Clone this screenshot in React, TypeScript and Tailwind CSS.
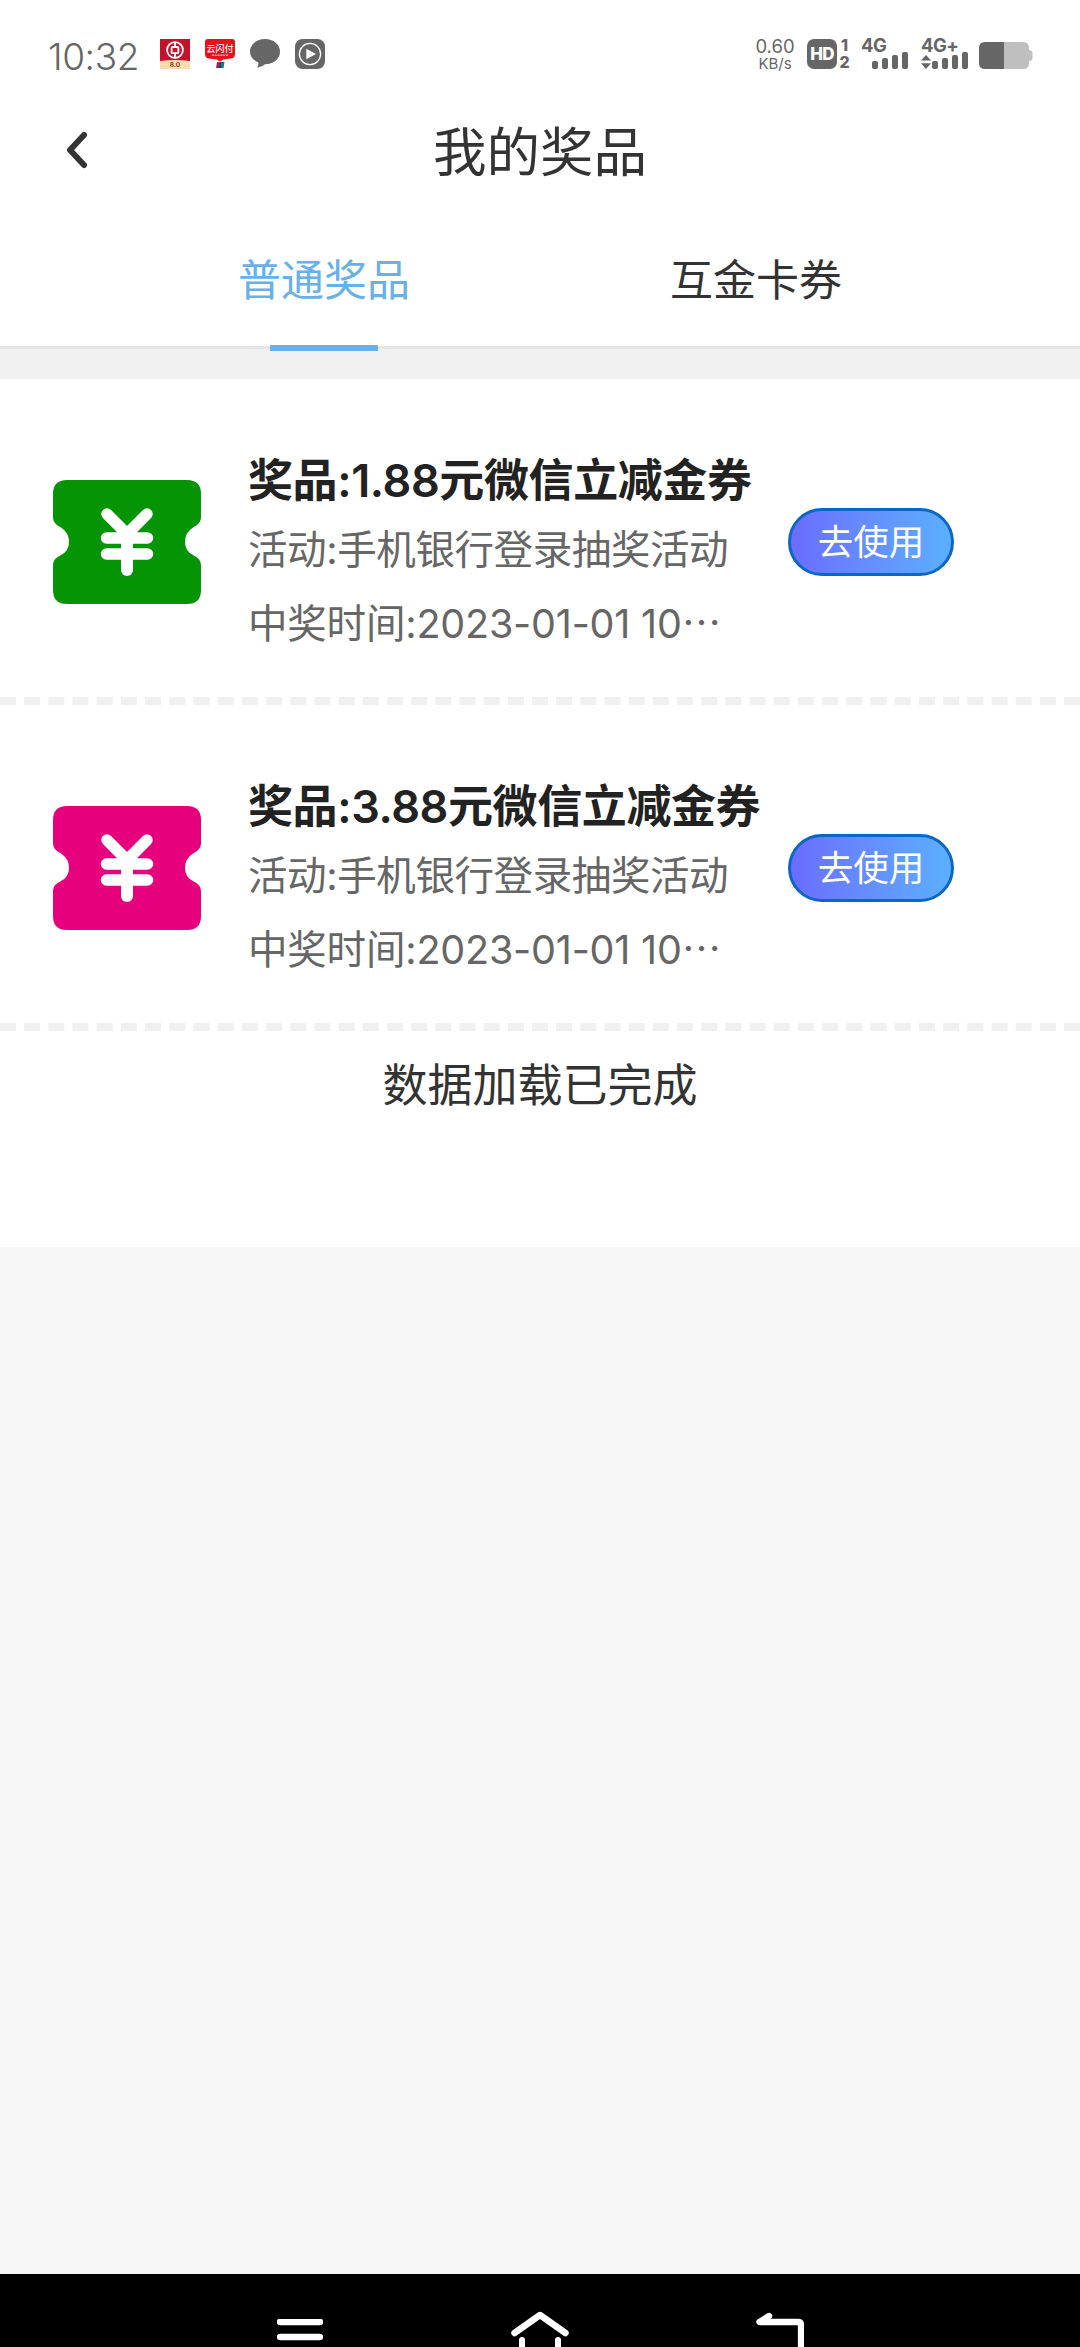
import React from "react";

const prizes = [
  {
    name: "奖品:1.88元微信立减金券",
    activity: "活动:手机银行登录抽奖活动",
    time: "中奖时间:2023-01-01 10",
    color: "#049404",
  },
  {
    name: "奖品:3.88元微信立减金券",
    activity: "活动:手机银行登录抽奖活动",
    time: "中奖时间:2023-01-01 10",
    color: "#e6007d",
  },
];

function SignalBars() {
  return (
    <div className="flex items-end gap-[4px]">
      <div className="h-[8px] w-[6px] rounded-[2px] bg-[#666]" />
      <div className="h-[11px] w-[6px] rounded-[2px] bg-[#666]" />
      <div className="h-[14px] w-[6px] rounded-[2px] bg-[#666]" />
      <div className="h-[17px] w-[6px] rounded-[2px] bg-[#666]" />
    </div>
  );
}

function BankIcon() {
  return (
    <svg width="30" height="30" viewBox="0 0 30 30" className="shrink-0">
      <rect width="30" height="30" fill="#c2132c" />
      <path d="M0 22 Q15 20 30 22 V30 H0 Z" fill="#f6dcae" />
      <circle cx="15" cy="11" r="7.9" fill="none" stroke="#fff" strokeWidth="1.8" />
      <rect x="11.6" y="8" width="6.8" height="6.2" rx="1" fill="none" stroke="#fff" strokeWidth="1.8" />
      <path d="M15 3 V8 M15 14 V19" stroke="#fff" strokeWidth="1.8" />
      <text x="15" y="28.2" textAnchor="middle" fontSize="6.5" fontWeight="700" fill="#8a3b1c" fontFamily="Inter">
        8.0
      </text>
    </svg>
  );
}

function UnionPayIcon() {
  return (
    <svg width="30" height="30" viewBox="0 0 30 30" className="shrink-0">
      <path d="M3 0 H27 Q30 0 30 3 V15 Q30 19 26 19.5 L18 20.5 Q15 24 12 20.5 L4 19.5 Q0 19 0 15 V3 Q0 0 3 0 Z" fill="#e8101c" />
      <text x="15" y="12.7" textAnchor="middle" fontSize="9" fontWeight="500" fill="#fff" fontFamily="Noto Sans CJK SC">
        云闪付
      </text>
      <path d="M7 16.3 H23" stroke="#f9b4b8" strokeWidth="1.6" strokeDasharray="2 0.8" />
      <path d="M12 23 H15 L14 29 H11 Z" fill="#b3243c" />
      <path d="M14.5 23 H17 L16 29 H13.5 Z" fill="#1c3f78" />
      <path d="M17 23 H19.5 L18.5 29 H15.8 Z" fill="#0d7482" />
    </svg>
  );
}

function StatusBar() {
  return (
    <div className="flex h-[100px] items-start pt-[39px] pl-[48px] text-[#666]">
      <div className="w-[112px] shrink-0 text-[37px] leading-[35px] font-light tracking-[-0.4px]">10:32</div>
      <div className="flex gap-[15px]">
        <BankIcon />
        <UnionPayIcon />
        <svg width="30" height="30" viewBox="0 0 30 30">
          <path d="M15 0 C23.5 0 30 5.5 30 12.7 C30 20 23.5 25 15 25.2 C13.5 26.5 10.5 28 7.2 28.6 C8.2 27 8.6 25 8.3 23.4 C3.3 21.3 0 17.5 0 12.7 C0 5.5 6.5 0 15 0 Z" fill="#666" />
        </svg>
        <svg width="30" height="30" viewBox="0 0 30 30">
          <rect width="30" height="30" rx="7.5" fill="#666" />
          <circle cx="15" cy="15" r="10.6" fill="none" stroke="#fff" strokeWidth="1.3" />
          <path d="M11.3 9.7 L21 15 L11.3 20.3 Z" fill="#fff" />
        </svg>
      </div>
      <div className="-mt-[2px] ml-[430px] flex w-[40px] shrink-0 flex-col items-center">
        <span className="text-[18.5px] leading-[18px]">0.60</span>
        <span className="text-[15px] leading-[17px]">KB/s</span>
      </div>
      <div className="ml-[12px] flex h-[30px] w-[30px] shrink-0 items-center justify-center rounded-[7px] bg-[#666] text-[17px] leading-[22px] font-extrabold tracking-[-0.8px] text-white">
        HD
      </div>
      <div className="-mt-[2px] flex w-[15px] shrink-0 flex-col items-center text-[16px] leading-[17px] font-extrabold">
        <span>1</span>
        <span>2</span>
      </div>
      <div className="-mt-[5px] ml-[9px] flex h-[35px] w-[47px] shrink-0 flex-col items-end">
        <div className="h-[18px] w-full text-[18.5px] leading-[23px] font-bold tracking-[-0.6px]">4G</div>
        <SignalBars />
      </div>
      <div className="-mt-[5px] ml-[13px] flex h-[35px] w-[47px] shrink-0 flex-col">
        <div className="h-[18px] text-[18.5px] leading-[23px] font-bold tracking-[-0.6px]">4G+</div>
        <div className="flex items-end justify-between">
          <svg width="10" height="14" viewBox="0 0 10 14">
            <path d="M5 0 L10 5.6 H0 Z M5 14 L10 8.2 H0 Z" fill="#666" />
          </svg>
          <SignalBars />
        </div>
      </div>
      <svg width="54" height="27" viewBox="0 0 54 27" className="mt-[3px] ml-[11px] shrink-0">
        <path d="M25 0 H44 Q50 0 50 6 V8 Q53.5 8.5 53.5 11 V16 Q53.5 18.5 50 19 V21 Q50 27 44 27 H25 Z" fill="#bfbfbf" />
        <path d="M6 0 H25 V27 H6 Q0 27 0 21 V6 Q0 0 6 0 Z" fill="#666" />
      </svg>
    </div>
  );
}

function Ticket({ color }: { color: string }) {
  return (
    <svg width="148" height="124" viewBox="0 0 148 124" className="shrink-0">
      <path
        d="M14 0 H134 Q148 0 148 14 V37 C148 43 144 45 140 47.5 Q132 52.5 132 62 Q132 71 140 75 C144 77.5 148 79 148 86 V110 Q148 124 134 124 H14 Q0 124 0 110 V86 C0 79 4 77.5 8 75 Q16 71 16 62 Q16 52.5 8 47.5 C4 45 0 43 0 37 V14 Q0 0 14 0 Z"
        fill={color}
      />
      <g stroke="#fff" strokeLinecap="round" fill="none">
        <path d="M54 34 L74 54 L94 34" strokeWidth="11.5" />
        <path d="M74 54 V90" strokeWidth="12" />
        <path d="M53.5 58 H94.5 M53.5 74 H94.5" strokeWidth="11.5" />
      </g>
    </svg>
  );
}

function PrizeRow({ prize }: { prize: (typeof prizes)[number] }) {
  return (
    <div className="flex h-[326px] items-start border-b-8 border-dashed border-[#f0f0f0] pl-[53px]">
      <div className="pt-[101px]">
        <Ticket color={prize.color} />
      </div>
      <div className="ml-[47px] w-[540px] pt-[71px] whitespace-nowrap">
        <h2 className="text-[45px] leading-[62px] font-semibold tracking-[-0.4px] text-[#222]">{prize.name}</h2>
        <p className="mt-[8px] text-[39.5px] leading-[60px] tracking-[-0.4px] text-[#666]">{prize.activity}</p>
        <p className="mt-[11px] text-[39.5px] leading-[60px] tracking-[-0.2px] text-[#666]">
          {prize.time}
          <span className="font-['Noto_Sans_CJK_SC']">…</span>
        </p>
      </div>
      <button className="mt-[129px] flex h-[68px] w-[166px] items-center justify-center rounded-full border-[3px] border-[#0c66c4] bg-linear-to-r from-[#6a6cff] to-[#5aafff] pt-[2px] text-[35.5px] leading-[60px] text-white">
        去使用
      </button>
    </div>
  );
}

export default function App() {
  return (
    <div lang="zh-CN" className="flex h-[2347px] w-[1080px] flex-col overflow-hidden bg-[#f7f7f7] font-['Inter','Noto_Sans_CJK_SC',sans-serif]">
      <div className="bg-white">
        <StatusBar />
        <header className="flex h-[107px] items-start">
          <svg width="24" height="40" viewBox="0 0 24 40" className="mt-[30px] ml-[65px] shrink-0">
            <path d="M19 5 L5 20 L19 35" fill="none" stroke="#333" strokeWidth="6" strokeLinecap="round" strokeLinejoin="round" />
          </svg>
          <h1 className="mr-[89px] flex-1 text-center text-[53.5px] leading-[106px] text-[#333]">我的奖品</h1>
        </header>
        <nav className="flex h-[139px] px-[108px] text-[43px] leading-[147px] text-[#333]">
          <div className="flex w-[432px] flex-col items-center text-[#68b0e8]">
            <span>普通奖品</span>
          </div>
          <div className="flex w-[432px] flex-col items-center">
            <span>互金卡券</span>
          </div>
        </nav>
      </div>
      <div className="h-[33px] shrink-0 border-t-[3px] border-[#e5e5e5] bg-[#f1f1f1] px-[270px]">
        <div className="relative -top-[4px] h-[6px] w-[108px] bg-[#68b0e8]" />
      </div>
      <main className="h-[868px] shrink-0 bg-white">
        {prizes.map((p) => (
          <PrizeRow key={p.name} prize={p} />
        ))}
        <p className="pt-[23px] text-center text-[45px] leading-[64px] text-[#333]">数据加载已完成</p>
      </main>
      <footer className="mt-auto flex h-[73px] shrink-0 items-end bg-black">
        <svg width="46" height="28" viewBox="0 0 46 28" className="ml-[277px]">
          <path d="M3 3 H43 M3 18 H43" stroke="#fff" strokeWidth="6.5" strokeLinecap="round" />
        </svg>
        <svg width="58" height="36" viewBox="0 0 58 36" className="ml-[188px]">
          <path d="M3.5 22 L29 4 L54.5 22" fill="none" stroke="#fff" strokeWidth="6.5" strokeLinecap="round" strokeLinejoin="round" />
          <path d="M11 29 V40 M47 29 V40" stroke="#fff" strokeWidth="6" strokeLinecap="round" />
        </svg>
        <svg width="48" height="35" viewBox="0 0 48 35" className="ml-[187px]">
          <path d="M13 4 L3.5 10 H42 Q45 10 45 13 V40" fill="none" stroke="#fff" strokeWidth="6.3" strokeLinecap="round" strokeLinejoin="round" />
        </svg>
      </footer>
    </div>
  );
}
